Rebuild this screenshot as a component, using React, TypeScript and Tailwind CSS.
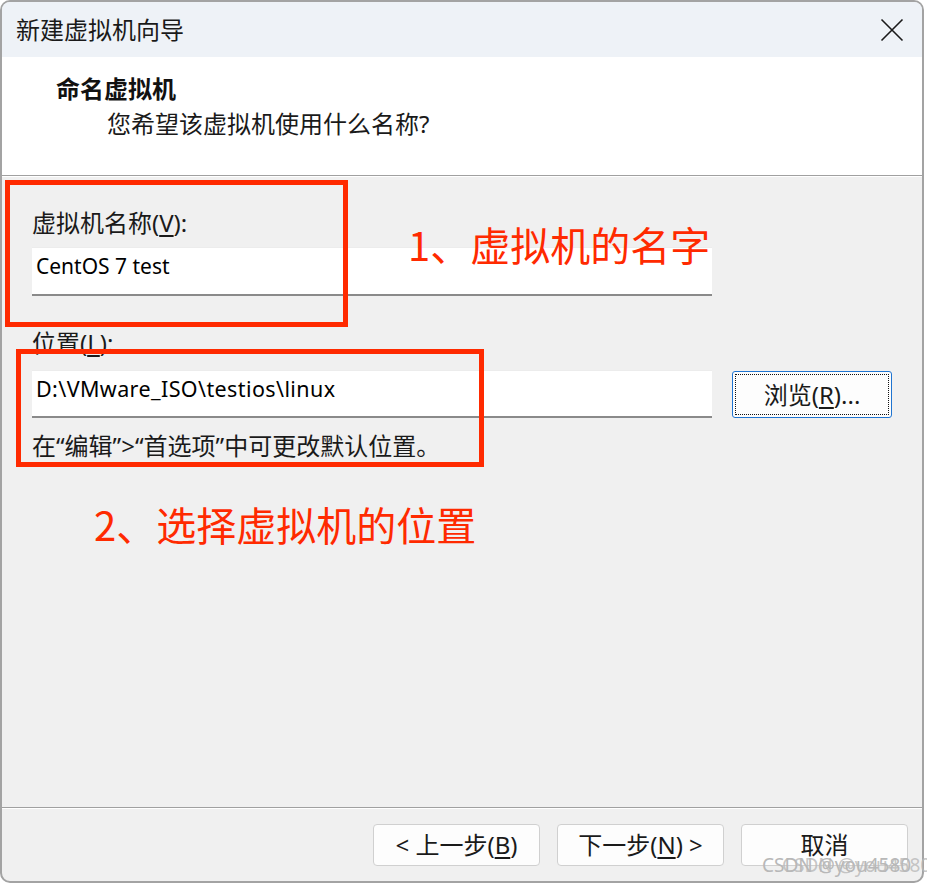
import React from "react";

const FONT = { fontFamily: '"Noto Sans", "Noto Sans CJK SC", sans-serif' };

function U({ children }: { children: React.ReactNode }) {
  return <span className="underline underline-offset-[3px] decoration-[1.5px]">{children}</span>;
}

function FooterButton({ children }: { children: React.ReactNode }) {
  return (
    <div className="flex h-[42px] w-[167px] items-center justify-center rounded-[4px] border border-[#d0d0d0] bg-[#fdfdfd] text-[24px] leading-[28px] text-[#1a1a1a]">
      {children}
    </div>
  );
}

export default function App() {
  return (
    <div className="relative h-[884px] w-[927px] overflow-hidden bg-white" style={FONT}>
      {/* window */}
      <div className="flex h-[883px] w-[924px] flex-col overflow-hidden rounded-[10px] border-2 border-[#a3a3a3] bg-[#f0f0f0]">
        {/* title bar */}
        <div className="flex h-[55px] shrink-0 items-center justify-between bg-[#eef2f7] pl-[14px] pr-[18px]">
          <span className="text-[24px] leading-[28px] text-[#1a1a1a]">新建虚拟机向导</span>
          <svg width="24" height="24" viewBox="0 0 24 24" className="mt-[1px]">
            <path d="M1.5 1.5 L22.5 22.5 M22.5 1.5 L1.5 22.5" stroke="#1a1a1a" strokeWidth="1.6" fill="none" />
          </svg>
        </div>

        {/* header */}
        <div className="flex h-[118px] shrink-0 flex-col bg-white pl-[54px] pt-[18px]">
          <span className="text-[24px] font-bold leading-[28px] text-[#111]">命名虚拟机</span>
          <span className="mt-[7px] pl-[51px] text-[24px] leading-[28px] text-[#1a1a1a]">
            您希望该虚拟机使用什么名称?
          </span>
        </div>
        <div className="h-px shrink-0 bg-[#a0a0a0]" />
        <div className="h-px shrink-0 bg-white" />

        {/* body */}
        <div className="flex flex-1 flex-col pl-[30px] text-[#1a1a1a]">
          <span className="mt-[32px] text-[24px] leading-[28px]">
            虚拟机名称(<U>V</U>):
          </span>
          <div className="mt-[10px] flex h-[49px] w-[680px] items-start border-t border-b-2 border-t-[#ececec] border-b-[#8a8a8a] bg-white pl-[4px] pt-[4px]">
            <span className="text-[21px] leading-[28px] text-black">CentOS 7 test</span>
          </div>

          <span className="mt-[33px] text-[24px] leading-[28px]">
            位置(<U>L</U>):
          </span>
          <div className="mt-[13px] flex items-start gap-[20px]">
            <div className="flex h-[48px] w-[680px] items-start border-t border-b-2 border-t-[#ececec] border-b-[#8a8a8a] bg-white pl-[4px] pt-[4px]">
              <span className="text-[21.5px] leading-[28px] tracking-[0.4px] text-black">D:\VMware_ISO\testios\linux</span>
            </div>
            <div className="mt-px flex h-[47px] w-[160px] items-center justify-center rounded-[3px] border border-[#1f74d0] bg-[#fdfdfd] p-[2px]">
              <div className="flex h-full w-full items-center justify-center border border-dotted border-[#111] text-[24px] leading-[28px]">
                浏览(<U>R</U>)...
              </div>
            </div>
          </div>
          <span className="mt-[14px] text-[24px] leading-[28px]">
            在“编辑”&gt;“首选项”中可更改默认位置。
          </span>
        </div>

        <div className="h-px shrink-0 bg-[#a0a0a0]" />
        <div className="h-px shrink-0 bg-white" />

        {/* footer */}
        <div className="flex h-[72px] shrink-0 items-start justify-end gap-[17px] pr-[14px] pt-[15px]">
          <FooterButton>
            &lt; 上一步(<U>B</U>)
          </FooterButton>
          <FooterButton>
            下一步(<U>N</U>) &gt;
          </FooterButton>
          <FooterButton>取消</FooterButton>
        </div>
      </div>

      {/* annotations */}
      <div className="absolute left-[5px] top-[180px] h-[147px] w-[343px] border-[5px] border-[#ff2a00]" />
      <div className="absolute left-[16px] top-[349px] h-[118px] w-[468px] border-[5px] border-[#ff2a00]" />
      <div
        className="absolute left-[408px] top-[219px] text-[40px] leading-[50px] text-[#ff2a00]"
        style={{ fontFamily: '"Noto Sans CJK SC", sans-serif' }}
      >
        1、虚拟机的名字
      </div>
      <div
        className="absolute left-[94px] top-[499px] text-[40px] leading-[50px] text-[#ff2a00]"
        style={{ fontFamily: '"Noto Sans CJK SC", sans-serif' }}
      >
        2、选择虚拟机的位置
      </div>

      {/* watermark (doubled via shadow) */}
      <div className="absolute left-[762px] top-[853px] text-[19px] leading-[24px] text-[#b8b8b8] [text-shadow:20px_0_0_rgba(184,184,184,0.8)]">
        CSDN @you4580
      </div>
    </div>
  );
}
